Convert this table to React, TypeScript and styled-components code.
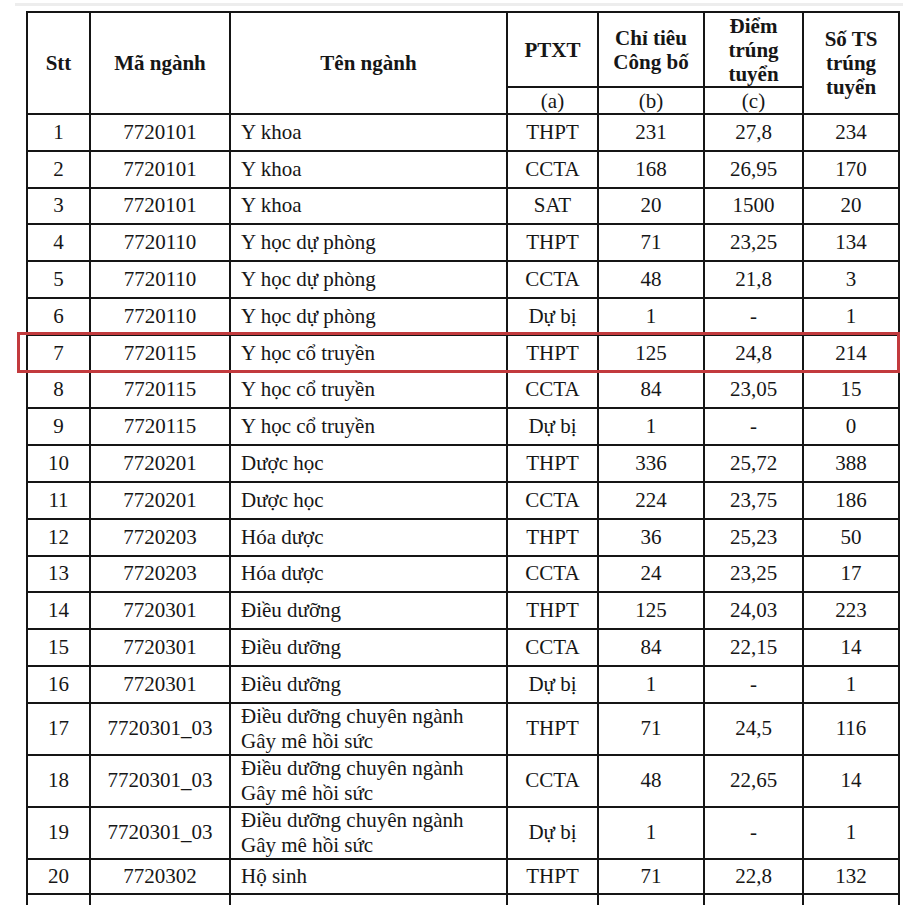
import React from 'react'
import styled, { createGlobalStyle } from 'styled-components'

const GlobalStyle = createGlobalStyle`
  html, body {
    margin: 0;
    padding: 0;
    background: #ffffff;
  }
`

const Page = styled.div`
  width: 915px;
  height: 908px;
  overflow: hidden;
  background: #ffffff;
  font-family: 'Liberation Serif', 'Times New Roman', serif;
  color: #161616;
`

const ScanEdge = styled.div`
  height: 3px;
  margin: 3px 12px 0 15px;
  background: #ededed;
`

const Viewport = styled.div`
  position: relative;
  height: 894px;
  margin-top: 5px;
  padding-left: 26px;
  overflow: hidden;
`

const Sheet = styled.table`
  width: 874px;
  border-collapse: collapse;
  table-layout: fixed;
  font-size: 21px;

  td,
  th {
    border: 2px solid #151515;
  }
`

const HeadRow = styled.tr<{ $h: number }>`
  height: ${(p) => p.$h}px;
`

const HeadCell = styled.th`
  padding: 0 2px;
  font-weight: 700;
  line-height: 24px;
  text-align: center;
  vertical-align: middle;
`

const SubCell = styled.th`
  padding: 0;
  font-weight: 400;
  line-height: 24px;
  text-align: center;
  vertical-align: middle;
`

const BodyRow = styled.tr<{ $h: number }>`
  height: ${(p) => p.$h}px;
`

const Cell = styled.td<{ $left?: boolean }>`
  padding: ${(p) => (p.$left ? '0 4px 0 10px' : '0 2px')};
  line-height: 25px;
  text-align: ${(p) => (p.$left ? 'left' : 'center')};
  vertical-align: middle;
  white-space: nowrap;
`

const Highlight = styled.div`
  position: absolute;
  left: 17px;
  top: 321px;
  width: 877px;
  height: 35px;
  border: 3px solid #c23a3d;
  pointer-events: none;
`

type Admission = {
  stt: string
  code: string
  name: string[]
  method: string
  quota: string
  score: string
  admitted: string
  h?: number
}

const ROW_H = 36.8

const rows: Admission[] = [
  { stt: '1', code: '7720101', name: ['Y khoa'], method: 'THPT', quota: '231', score: '27,8', admitted: '234' },
  { stt: '2', code: '7720101', name: ['Y khoa'], method: 'CCTA', quota: '168', score: '26,95', admitted: '170' },
  { stt: '3', code: '7720101', name: ['Y khoa'], method: 'SAT', quota: '20', score: '1500', admitted: '20' },
  { stt: '4', code: '7720110', name: ['Y học dự phòng'], method: 'THPT', quota: '71', score: '23,25', admitted: '134' },
  { stt: '5', code: '7720110', name: ['Y học dự phòng'], method: 'CCTA', quota: '48', score: '21,8', admitted: '3' },
  { stt: '6', code: '7720110', name: ['Y học dự phòng'], method: 'Dự bị', quota: '1', score: '-', admitted: '1' },
  { stt: '7', code: '7720115', name: ['Y học cổ truyền'], method: 'THPT', quota: '125', score: '24,8', admitted: '214' },
  { stt: '8', code: '7720115', name: ['Y học cổ truyền'], method: 'CCTA', quota: '84', score: '23,05', admitted: '15' },
  { stt: '9', code: '7720115', name: ['Y học cổ truyền'], method: 'Dự bị', quota: '1', score: '-', admitted: '0' },
  { stt: '10', code: '7720201', name: ['Dược học'], method: 'THPT', quota: '336', score: '25,72', admitted: '388' },
  { stt: '11', code: '7720201', name: ['Dược học'], method: 'CCTA', quota: '224', score: '23,75', admitted: '186' },
  { stt: '12', code: '7720203', name: ['Hóa dược'], method: 'THPT', quota: '36', score: '25,23', admitted: '50' },
  { stt: '13', code: '7720203', name: ['Hóa dược'], method: 'CCTA', quota: '24', score: '23,25', admitted: '17' },
  { stt: '14', code: '7720301', name: ['Điều dưỡng'], method: 'THPT', quota: '125', score: '24,03', admitted: '223' },
  { stt: '15', code: '7720301', name: ['Điều dưỡng'], method: 'CCTA', quota: '84', score: '22,15', admitted: '14' },
  { stt: '16', code: '7720301', name: ['Điều dưỡng'], method: 'Dự bị', quota: '1', score: '-', admitted: '1' },
  { stt: '17', code: '7720301_03', name: ['Điều dưỡng chuyên ngành', 'Gây mê hồi sức'], method: 'THPT', quota: '71', score: '24,5', admitted: '116', h: 51 },
  { stt: '18', code: '7720301_03', name: ['Điều dưỡng chuyên ngành', 'Gây mê hồi sức'], method: 'CCTA', quota: '48', score: '22,65', admitted: '14', h: 52 },
  { stt: '19', code: '7720301_03', name: ['Điều dưỡng chuyên ngành', 'Gây mê hồi sức'], method: 'Dự bị', quota: '1', score: '-', admitted: '1', h: 52 },
  { stt: '20', code: '7720302', name: ['Hộ sinh'], method: 'THPT', quota: '71', score: '22,8', admitted: '132', h: 35.6 },
  { stt: '21', code: '7720302', name: ['Hộ sinh'], method: 'CCTA', quota: '48', score: '22,35', admitted: '2' },
]

const colWidths = [63, 140, 277, 91, 106, 99, 96]

export default function App() {
  return (
    <Page>
      <GlobalStyle />
      <ScanEdge />
      <Viewport>
        <Sheet>
          <colgroup>
            {colWidths.map((w, i) => (
              <col key={i} style={{ width: w }} />
            ))}
          </colgroup>
          <thead>
            <HeadRow $h={75}>
              <HeadCell rowSpan={2}>Stt</HeadCell>
              <HeadCell rowSpan={2}>Mã ngành</HeadCell>
              <HeadCell rowSpan={2}>Tên ngành</HeadCell>
              <HeadCell>PTXT</HeadCell>
              <HeadCell>
                Chỉ tiêu
                <br />
                Công bố
              </HeadCell>
              <HeadCell>
                Điểm
                <br />
                trúng
                <br />
                tuyển
              </HeadCell>
              <HeadCell rowSpan={2}>
                Số TS
                <br />
                trúng
                <br />
                tuyển
              </HeadCell>
            </HeadRow>
            <HeadRow $h={27}>
              <SubCell>(a)</SubCell>
              <SubCell>(b)</SubCell>
              <SubCell>(c)</SubCell>
            </HeadRow>
          </thead>
          <tbody>
            {rows.map((r) => (
              <BodyRow key={r.stt} $h={r.h ?? ROW_H}>
                <Cell>{r.stt}</Cell>
                <Cell>{r.code}</Cell>
                <Cell $left>
                  {r.name.map((line, i) => (
                    <React.Fragment key={i}>
                      {i > 0 && <br />}
                      {line}
                    </React.Fragment>
                  ))}
                </Cell>
                <Cell>{r.method}</Cell>
                <Cell>{r.quota}</Cell>
                <Cell>{r.score}</Cell>
                <Cell>{r.admitted}</Cell>
              </BodyRow>
            ))}
          </tbody>
        </Sheet>
        <Highlight />
      </Viewport>
    </Page>
  )
}
